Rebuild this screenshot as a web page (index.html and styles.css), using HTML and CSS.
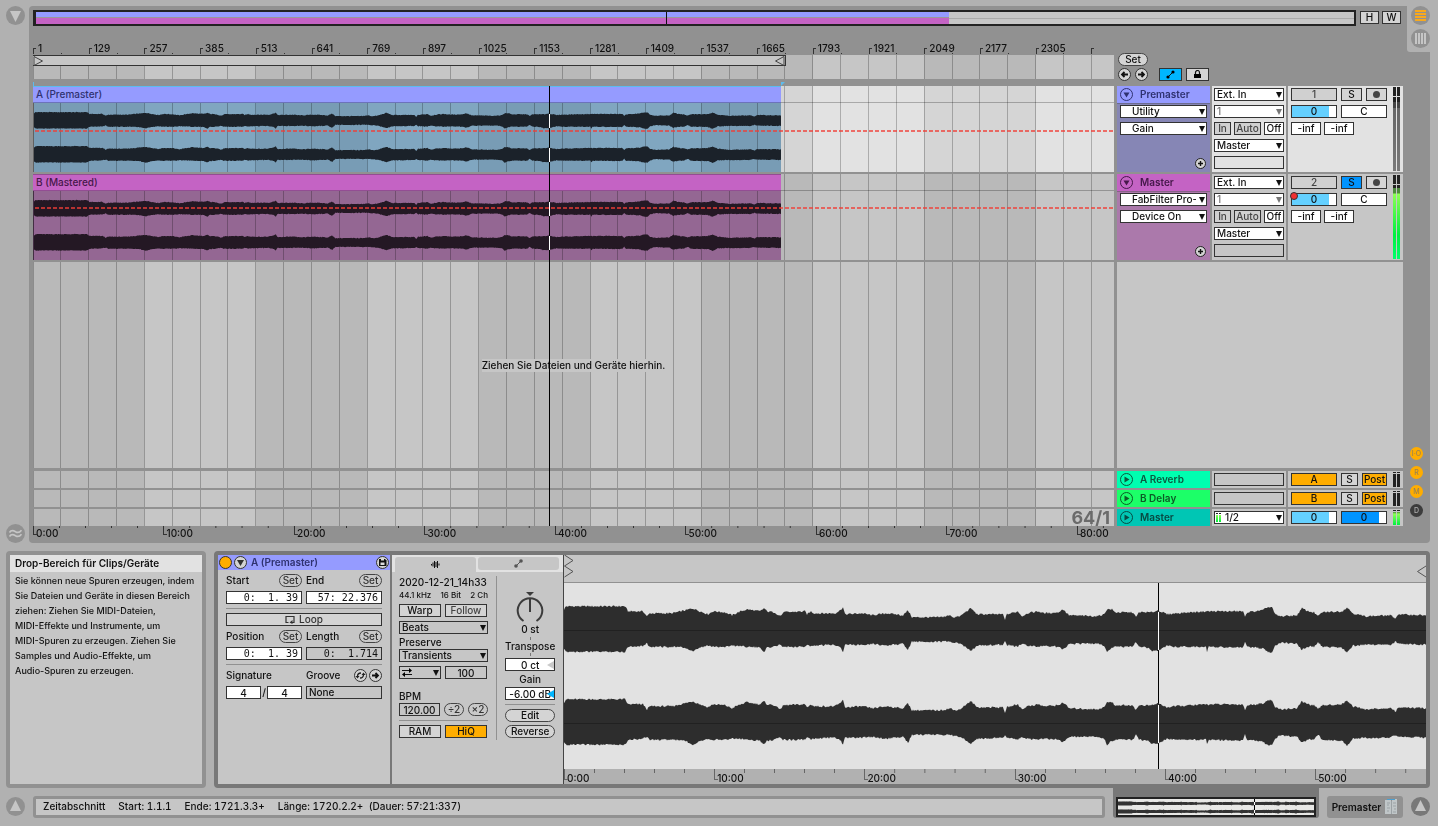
FILE: index.html
```
<!DOCTYPE html>
<html lang="de">
<head>
    <meta charset="UTF-8">
    <meta name="viewport" content="width=device-width, initial-scale=1.0">
    <title>Arrangement</title>
    <link rel="stylesheet" href="styles.css">
</head>
<body>
    <!-- Arrangement -->
    <div class="workspace">
        <div class="side-rail">
            <button class="round" aria-label="Browser"><svg viewBox="0 0 19 19"><path d="M4 5h11l-5.5 11z" fill="#c6c6c6"/></svg></button>
            <button class="round" aria-label="Groove Pool"><svg viewBox="0 0 19 19"><path d="M3.500 8.500c2-3 4-2 6-.8s4 1 6-1.500M3.500 12.500c2-3 4-2 6-.8s4 1 6-1.500" fill="none" stroke="#c6c6c6" stroke-width="1.600"/></svg></button>
        </div>

        <main class="arrange">
            <div class="arrange-main">
                <div class="overview-row">
                    <div class="overview">
                        <div class="overview-a"></div>
                        <div class="overview-b"></div>
                        <div class="overview-head"></div>
                    </div>
                    <button class="btn square">H</button>
                    <button class="btn square">W</button>
                </div>

                <div class="arrange-body">
                    <div class="timeline">
                        <div class="bar-ruler">
                            <span>1</span><span>129</span><span>257</span><span>385</span><span>513</span>
                            <span>641</span><span>769</span><span>897</span><span>1025</span><span>1153</span>
                            <span>1281</span><span>1409</span><span>1537</span><span>1665</span><span>1793</span>
                            <span>1921</span><span>2049</span><span>2177</span><span>2305</span><span></span>
                        </div>
                        <div class="scrub lane">
                            <div class="loop-bar">
                                <svg width="11" height="11" viewBox="0 0 11 11"><path d="M1 .5l8.500 4.500L1 9.500z" fill="none" stroke="#444"/></svg>
                                <svg width="11" height="11" viewBox="0 0 11 11"><path d="M10 .5L1.500 5 10 9.500z" fill="none" stroke="#444"/></svg>
                            </div>
                        </div>
                        <div class="marker-gap"><i></i></div>

                        <div class="lanes">
                            <div class="lane track selected">
                                <div class="clip clip-a">
                                    <div class="clip-name">A (Premaster)</div>
                                    <div class="clip-body"><svg class="wave" data-wave="arrange"></svg></div>
                                </div>
                                <div class="automation"></div>
                            </div>
                            <div class="lane track">
                                <div class="clip clip-b">
                                    <div class="clip-name">B (Mastered)</div>
                                    <div class="clip-body"><svg class="wave" data-wave="arrange"></svg></div>
                                </div>
                                <div class="automation high"></div>
                            </div>
                            <div class="lane drop-lane"><p>Ziehen Sie Dateien und Geräte hierhin.</p></div>
                            <div class="lane return"></div>
                            <div class="lane return"></div>
                            <div class="lane return"><span class="grid-size">64/1</span></div>
                            <div class="playhead"></div>
                        </div>

                        <div class="time-ruler arrange-time">
                            <span>0:00</span><span>10:00</span><span>20:00</span><span>30:00</span><span>40:00</span>
                            <span>50:00</span><span>60:00</span><span>70:00</span><span>80:00</span>
                        </div>
                    </div>

                    <div class="tracks">
                        <div class="locators">
                            <button class="pill set">Set</button>
                            <div class="locator-row">
                                <button class="ring" aria-label="Zurück"><svg viewBox="0 0 13 13"><path d="M10 6.500H4M6.500 4L4 6.500 6.500 9" fill="none" stroke="#111" stroke-width="1.800"/></svg></button>
                                <button class="ring" aria-label="Vor"><svg viewBox="0 0 13 13"><path d="M3 6.500h6M6.500 4L9 6.500 6.500 9" fill="none" stroke="#111" stroke-width="1.800"/></svg></button>
                                <button class="btn tool on-cyan" aria-label="Automation"><svg width="9" height="9" viewBox="0 0 9 9"><path d="M1.500 7.500l6-6" stroke="#111"/><circle cx="2" cy="7" r="1.600"/><circle cx="7" cy="2" r="1.600"/></svg></button>
                                <button class="btn tool" aria-label="Hüllkurven fixieren"><svg width="9" height="9" viewBox="0 0 9 9"><path d="M1 4h7v4H1z"/><path d="M2.500 4V2.500a2 2 0 0 1 4 0V4" fill="none" stroke="#111" stroke-width="1.200"/></svg></button>
                            </div>
                        </div>

                        <section class="track-row selected">
                            <div class="head head-a">
                                <div class="title"><button class="fold" aria-label="Falten"><svg viewBox="0 0 13 13"><circle cx="6.500" cy="6.500" r="6" fill="none" stroke="currentColor"/><path d="M3.500 4.500h6l-3 5z" fill="currentColor"/></svg></button>Premaster</div>
                                <div class="choosers">
                                    <label class="select inset"><select aria-label="Gerät"><option>Utility</option></select></label>
                                    <label class="select inset"><select aria-label="Parameter"><option>Gain</option></select></label>
                                </div>
                                <button class="plus" aria-label="Spur hinzufügen"><svg viewBox="0 0 11 11"><circle cx="5.500" cy="5.500" r="5" fill="#d4d4d4" stroke="#222"/><path d="M5.500 3v5M3 5.500h5" stroke="#111" stroke-width="1.400"/></svg></button>
                            </div>
                            <div class="io">
                                <label class="select"><select aria-label="Eingang"><option>Ext. In</option></select></label>
                                <label class="select dim"><select aria-label="Kanal"><option>1</option></select></label>
                                <div class="monitor"><button class="btn off">In</button><button class="btn off">Auto</button><button class="btn white">Off</button></div>
                                <label class="select"><select aria-label="Ausgang"><option>Master</option></select></label>
                                <div class="blank"></div>
                            </div>
                            <div class="mix">
                                <div class="mix-grid">
                                    <div class="mix-line"><button class="btn w46 off">1</button><button class="btn w21">S</button><button class="btn w21" aria-label="Aufnahme"><i class="rec"></i></button></div>
                                    <div class="mix-line"><label class="fader w46">0<input type="range" aria-label="Lautstärke" value="83"></label><button class="btn w46 white">C</button></div>
                                    <div class="mix-line sends"><button class="btn w30 white">-inf</button><button class="btn w30 white">-inf</button></div>
                                </div>
                                <div class="meter idle"><i></i><i></i></div>
                            </div>
                        </section>

                        <section class="track-row">
                            <div class="head head-b">
                                <div class="title"><button class="fold" aria-label="Falten"><svg viewBox="0 0 13 13"><circle cx="6.500" cy="6.500" r="6" fill="none" stroke="currentColor"/><path d="M3.500 4.500h6l-3 5z" fill="currentColor"/></svg></button>Master</div>
                                <div class="choosers">
                                    <label class="select inset"><select aria-label="Gerät"><option>FabFilter Pro-L</option></select></label>
                                    <label class="select inset"><select aria-label="Parameter"><option>Device On</option></select></label>
                                </div>
                                <button class="plus" aria-label="Spur hinzufügen"><svg viewBox="0 0 11 11"><circle cx="5.500" cy="5.500" r="5" fill="#d4d4d4" stroke="#222"/><path d="M5.500 3v5M3 5.500h5" stroke="#111" stroke-width="1.400"/></svg></button>
                            </div>
                            <div class="io">
                                <label class="select"><select aria-label="Eingang"><option>Ext. In</option></select></label>
                                <label class="select dim"><select aria-label="Kanal"><option>1</option></select></label>
                                <div class="monitor"><button class="btn off">In</button><button class="btn off">Auto</button><button class="btn white">Off</button></div>
                                <label class="select"><select aria-label="Ausgang"><option>Master</option></select></label>
                                <div class="blank"></div>
                            </div>
                            <div class="mix">
                                <div class="mix-grid">
                                    <div class="mix-line"><button class="btn w46 off">2</button><button class="btn w21 on-blue">S</button><button class="btn w21" aria-label="Aufnahme"><i class="rec"></i></button></div>
                                    <div class="mix-line"><label class="fader w46 automated">0<input type="range" aria-label="Lautstärke" value="83"></label><button class="btn w46 white">C</button></div>
                                    <div class="mix-line sends"><button class="btn w30 white">-inf</button><button class="btn w30 white">-inf</button></div>
                                </div>
                                <div class="meter live"><i></i><i></i></div>
                            </div>
                        </section>

                        <div class="empty-head"></div>

                        <section class="track-row return-row">
                            <div class="head"><div class="title ret-a"><button class="fold" aria-label="Entfalten"><svg viewBox="0 0 13 13"><circle cx="6.500" cy="6.500" r="6" fill="none" stroke="currentColor"/><path d="M4.500 3.500v6l5-3z" fill="currentColor"/></svg></button>A Reverb</div></div>
                            <div class="io"><div class="blank"></div></div>
                            <div class="mix"><div class="mix-grid"><div class="mix-line"><button class="btn w46 on-orange">A</button><button class="btn w17">S</button><button class="btn w25 on-orange">Post</button></div></div><div class="meter small"><i></i><i></i></div></div>
                        </section>
                        <section class="track-row return-row">
                            <div class="head"><div class="title ret-b"><button class="fold" aria-label="Entfalten"><svg viewBox="0 0 13 13"><circle cx="6.500" cy="6.500" r="6" fill="none" stroke="currentColor"/><path d="M4.500 3.500v6l5-3z" fill="currentColor"/></svg></button>B Delay</div></div>
                            <div class="io"><div class="blank"></div></div>
                            <div class="mix"><div class="mix-grid"><div class="mix-line"><button class="btn w46 on-orange">B</button><button class="btn w17">S</button><button class="btn w25 on-orange">Post</button></div></div><div class="meter small"><i></i><i></i></div></div>
                        </section>
                        <section class="track-row return-row">
                            <div class="head"><div class="title ret-m"><button class="fold" aria-label="Entfalten"><svg viewBox="0 0 13 13"><circle cx="6.500" cy="6.500" r="6" fill="none" stroke="currentColor"/><path d="M4.500 3.500v6l5-3z" fill="currentColor"/></svg></button>Master</div></div>
                            <div class="io"><label class="select out"><span class="mini-meter"><i></i><i></i></span><select aria-label="Master-Ausgang"><option>1/2</option></select></label></div>
                            <div class="mix"><div class="mix-grid"><div class="mix-line"><label class="fader w46">0<input type="range" aria-label="Master-Lautstärke" value="83"></label><label class="fader w46 cue">0<input type="range" aria-label="Cue-Lautstärke" value="83"></label></div></div><div class="meter small live"><i></i><i></i></div></div>
                        </section>
                    </div>
                </div>
            </div>

            <div class="view-rail">
                <div class="view-switch">
                    <button class="round" aria-label="Arrangement"><svg viewBox="0 0 19 19"><path d="M4 5h11M4 8h11M4 11h11M4 14h11" stroke="#f8a91c" stroke-width="2"/></svg></button>
                    <button class="round" aria-label="Session"><svg viewBox="0 0 19 19"><path d="M5 4v11M8 4v11M11 4v11M14 4v11" stroke="#c6c6c6" stroke-width="2"/></svg></button>
                </div>
                <div class="show-switch">
                    <button>I·O</button>
                    <button>R</button>
                    <button>M</button>
                    <button class="dark">D</button>
                </div>
            </div>
        </main>
    </div>

    <!-- Info view and clip view -->
    <div class="detail">
        <aside class="info">
            <h2>Drop-Bereich für Clips/Geräte</h2>
            <p>Sie können neue Spuren erzeugen, indem<br>Sie Dateien und Geräte in diesen Bereich<br>ziehen: Ziehen Sie MIDI-Dateien,<br>MIDI-Effekte und Instrumente, um<br>MIDI-Spuren zu erzeugen. Ziehen Sie<br>Samples und Audio-Effekte, um<br>Audio-Spuren zu erzeugen.</p>
        </aside>

        <section class="clip-view">
            <div class="clip-box">
                <div class="clip-title">
                    <button class="ring amber" aria-label="Clip aktivieren"></button>
                    <button class="ring" aria-label="Falten"><svg viewBox="0 0 13 13"><path d="M3 4h7l-3.500 6z" fill="#333"/></svg></button>
                    <span>A (Premaster)</span>
                    <button class="ring" aria-label="Speichern"><svg viewBox="0 0 13 13"><path d="M3 3h6l1.500 1.500V10H3z" fill="#111"/><path d="M4.500 6.500h4V9h-4zM5 3h3v1.500H5z" fill="#ddd"/></svg></button>
                </div>
                <div class="clip-form">
                    <div class="pair">
                        <div class="caption"><label for="start">Start</label><button class="pill">Set</button></div>
                        <div class="caption"><label for="end">End</label><button class="pill">Set</button></div>
                        <input class="field mono" id="start" value="0:  1. 39">
                        <input class="field mono" id="end" value="57: 22.376">
                    </div>
                    <hr>
                    <button class="btn loop-btn"><svg width="10" height="9" viewBox="0 0 10 9"><path d="M3.500 7.500H1v-6h8v6H6.500" fill="none" stroke="#333" stroke-width="1.200"/><path d="M7.500 5v4l-3-1.500z" fill="#333"/></svg>Loop</button>
                    <div class="pair">
                        <div class="caption"><label for="pos">Position</label><button class="pill">Set</button></div>
                        <div class="caption"><label for="len">Length</label><button class="pill">Set</button></div>
                        <input class="field mono" id="pos" value="0:  1. 39">
                        <input class="field mono grey" id="len" value="0:  1.714">
                    </div>
                    <hr>
                    <div class="pair">
                        <div class="caption"><label for="num">Signature</label></div>
                        <div class="caption"><label for="groove">Groove</label>
                            <span class="caption-icons">
                                <button class="ring" aria-label="Groove wechseln"><svg viewBox="0 0 13 13"><path d="M3.500 7.500c0-2.500 1.500-3.500 3.500-3.500M9.500 5.500c0 2.500-1.500 3.500-3.500 3.500" fill="none" stroke="#222" stroke-width="1.300"/><path d="M1.500 7h4l-2 2.500zM7.500 6h4l-2-2.500z" fill="#222"/></svg></button>
                                <button class="ring" aria-label="Groove übernehmen"><svg viewBox="0 0 13 13"><path d="M3 6.500h6M6.500 4L9 6.500 6.500 9" fill="none" stroke="#111" stroke-width="1.800"/></svg></button>
                            </span>
                        </div>
                        <div class="signature"><input class="field" id="num" value="4"><span>/</span><input class="field" aria-label="Nenner" value="4"></div>
                        <label class="select grey bare"><select id="groove"><option>None</option></select></label>
                    </div>
                </div>
            </div>

            <div class="sample-box">
                <div class="tabs">
                    <button class="tab active" aria-label="Sample"><svg width="9" height="9" viewBox="0 0 9 9"><path d="M.5 4v1.500M2 2.500v4M3.500 1v7M5 2v5M6.500 1v7M8 3.500v2" stroke="#111"/></svg></button>
                    <button class="tab" aria-label="Hüllkurven"><svg width="9" height="9" viewBox="0 0 9 9"><path d="M1.500 7.500l6-6" stroke="#555"/><circle cx="2" cy="7" r="1.800" fill="#555"/><circle cx="7" cy="2" r="1.800" fill="#555"/></svg></button>
                </div>
                <div class="sample-form">
                    <div class="sample-left">
                        <div class="file-name">2020-12-21_14h33</div>
                        <div class="file-info"><span>44.1 kHz</span><span>16 Bit</span><span>2 Ch</span></div>
                        <div class="two"><button class="btn">Warp</button><button class="btn soft">Follow</button></div>
                        <label class="select grey"><select aria-label="Warp-Modus"><option>Beats</option></select></label>
                        <label class="caption-line" for="preserve">Preserve</label>
                        <label class="select grey"><select id="preserve"><option>Transients</option></select></label>
                        <div class="two">
                            <label class="select grey looped"><svg width="10" height="9" viewBox="0 0 10 9"><path d="M0 2.500h8M2 6.500h8" stroke="#111" stroke-width="1.200"/><path d="M7 0l3 2.500L7 5zM3 4L0 6.500 3 9z"/></svg><select aria-label="Transient-Loop"><option></option></select></label>
                            <input class="field grey" aria-label="Hüllkurve" value="100">
                        </div>
                        <label class="caption-line bpm-label" for="bpm">BPM</label>
                        <div class="bpm"><input class="field grey" id="bpm" value="120.00"><button class="pill">÷2</button><button class="pill">×2</button></div>
                        <hr>
                        <div class="two"><button class="btn">RAM</button><button class="btn on-orange">HiQ</button></div>
                    </div>
                    <div class="sample-right">
                        <label class="knob">
                            <svg width="32" height="32" viewBox="0 0 32 32"><path d="M9.500 30A12.300 12.300 0 1 1 22.500 30" fill="none" stroke="#3c3c3c" stroke-width="2"/><path d="M16 7v14" stroke="#3c3c3c" stroke-width="2"/><path d="M12 1h8l-4 4z" fill="#3c3c3c"/></svg>
                            0 st
                            <input type="range" aria-label="Transpose" min="-48" max="48" value="0">
                        </label>
                        <div class="tick-label">Transpose</div>
                        <div class="cent"><input class="field" aria-label="Cent" value="0 ct"></div>
                        <label class="gain-label" for="gain">Gain</label>
                        <div class="cent blue"><input class="field" id="gain" value="-6.00 dB"></div>
                        <hr>
                        <button class="pill wide">Edit</button>
                        <button class="pill wide">Reverse</button>
                    </div>
                </div>
            </div>

            <div class="sample-display">
                <div class="marker-bar">
                    <svg width="11" height="27" viewBox="0 0 11 27"><path d="M.5 0L9 5.500.5 11M.5 11L9 16.500.5 22" fill="none" stroke="#555"/></svg>
                    <svg width="9" height="27" viewBox="0 0 9 27"><path d="M9 11L.5 16.500 9 22" fill="none" stroke="#555"/></svg>
                </div>
                <div class="wave-area">
                    <div class="wave-head"></div>
                    <svg class="wave" data-wave="detail"></svg>
                </div>
                <div class="time-ruler detail-time">
                    <span>0:00</span><span>10:00</span><span>20:00</span><span>30:00</span><span>40:00</span><span>50:00</span>
                </div>
            </div>
        </section>
    </div>

    <!-- Status bar -->
    <footer class="status-row">
        <div class="side-rail low"><button class="round" aria-label="Info"><svg viewBox="0 0 19 19"><path d="M4 14h11L9.500 3z" fill="#c6c6c6"/></svg></button></div>
        <div class="status"><span>Zeitabschnitt</span><span>Start: 1.1.1</span><span>Ende: 1721.3.3+</span><span>Länge: 1720.2.2+ &nbsp;(Dauer: 57:21:337)</span></div>
        <div class="mini-tab"><div class="mini"><svg class="wave" data-wave="mini"></svg></div></div>
        <button class="device-chip">Premaster<svg width="13" height="16" viewBox="0 0 13 16"><path d="M0 1h6v14H0zM7 0h5v15H7z" fill="#c0c6c8"/><path d="M2 0h8v1H2z" fill="#4a9ed0"/><path d="M2 4h3M2 6h2M2 9h3M2 12h2M8 4h3M8 7h3M9 10h2M8 13h3M6.500 2v13" stroke="#9ba2a5"/></svg></button>
        <button class="round dark" aria-label="Detailansicht"><svg viewBox="0 0 19 19"><path d="M4 14h11L9.500 3z" fill="#c6c6c6"/></svg></button>
    </footer>

    <script src="script.js"></script>
</body>
</html>
```
FILE: styles.css
```
* {
    margin: 0;
    padding: 0;
    box-sizing: border-box;
}
body {
    font-family: Inter, "Liberation Sans", sans-serif;
    font-size: 10px;
    font-weight: 500;
    line-height: 13px;
    color: #111;
    background-color: #b1b1b1;
    min-height: 100vh;
    display: flex;
    flex-direction: column;
}
button, input, select {
    font: inherit;
    color: inherit;
    border: none;
    border-radius: 0;
    background: none;
    appearance: none;
    min-width: 0;
}
button {
    display: flex;
    align-items: center;
    justify-content: center;
    white-space: nowrap;
}
svg {
    display: block;
}
hr {
    border: none;
    height: 1px;
    background-color: #919191;
}

/* Shared controls */
.round {
    width: 19px;
    height: 19px;
    border-radius: 50%;
    background-color: #919191;
    flex: none;
}
.round svg {
    width: 19px;
    height: 19px;
}
.round.dark {
    background-color: #787878;
}
.btn {
    height: 13px;
    border: 1px solid #333;
    background-color: #d4d4d4;
    line-height: 11px;
}
.btn.white { background-color: #fff; }
.btn.off { background-color: #d0d0d0; color: #444; }
.btn.soft { color: #444; }
.btn.on-cyan { background-color: #00b6ff; }
.btn.on-blue { background-color: #0094ff; }
.btn.on-orange { background-color: #ffad00; }
.square { width: 19px; }
.w46 { width: 46px; }
.w30 { width: 30px; }
.w25 { width: 25px; }
.w21 { width: 21px; }
.w17 { width: 17px; }

.pill {
    height: 13px;
    padding: 0 4px;
    border: 1px solid #444;
    border-radius: 7px;
    background-color: #c9c9c9;
    color: #333;
    line-height: 11px;
}
.ring {
    width: 13px;
    height: 13px;
    border: 1px solid #333;
    border-radius: 50%;
    background-color: #d4d4d4;
    flex: none;
}
.ring svg {
    width: 13px;
    height: 13px;
    flex: none;
}
.ring.amber {
    background-color: #ffad00;
}
.select {
    position: relative;
    display: flex;
    align-items: center;
    height: 13px;
    border: 1px solid #333;
    background-color: #fff;
    min-width: 0;
}
.select select {
    width: 100%;
    height: 11px;
    line-height: 11px;
    padding: 0 10px 0 2px;
    overflow: hidden;
}
.select::after {
    content: "";
    position: absolute;
    right: 1px;
    border: 3px solid transparent;
    border-top: 6px solid #111;
    border-bottom: none;
    pointer-events: none;
}
.select.inset select { padding-left: 11px; }
.select.dim { color: #777; }
.select.dim::after { border-top-color: #777; }
.select.grey { background-color: #c6c6c6; }
.select.bare::after { display: none; }
.field {
    height: 13px;
    width: 100%;
    border: 1px solid #333;
    background-color: #fff;
    text-align: center;
    line-height: 11px;
}
.field.grey {
    background-color: #c6c6c6;
}
.field.mono {
    font-family: "DejaVu Sans Mono", monospace;
    font-size: 10px;
    text-align: right;
    padding-right: 3px;
}
.fader {
    position: relative;
    height: 13px;
    border: 1px solid #333;
    background: linear-gradient(to right, #64d0ff 84%, #fff 84%);
    text-align: center;
    line-height: 11px;
}
.fader.cue {
    background: linear-gradient(to right, #0094ff 84%, #fff 84%);
}
.fader input, .knob input {
    position: absolute;
    inset: 0;
    width: 100%;
    opacity: 0;
}
.fader.automated::before {
    content: "";
    position: absolute;
    left: -2px;
    top: -2px;
    width: 6px;
    height: 6px;
    border: 1px solid #333;
    border-radius: 50%;
    background-color: #f03030;
}

/* Arrangement */
.workspace {
    flex: 1;
    display: flex;
    padding: 6px 8px 0 0;
}
.side-rail {
    width: 29px;
    padding-left: 6px;
    display: flex;
    flex-direction: column;
    justify-content: space-between;
    flex: none;
}
.arrange {
    flex: 1;
    min-width: 0;
    display: flex;
    border-radius: 4px;
    background-color: #919191;
}
.arrange-main {
    flex: 1;
    min-width: 0;
    padding: 4px 4px 0 4px;
    display: flex;
    flex-direction: column;
}
.overview-row {
    display: flex;
    align-items: flex-start;
    gap: 3px;
    padding-right: 2px;
}
.overview-row .square {
    margin-top: 1px;
}
.overview {
    position: relative;
    flex: 1;
    height: 16px;
    margin-right: 1px;
    border: 2px solid #222;
    border-left-width: 3px;
    background: linear-gradient(#c6c6c6 6px, #aaa 6px, #aaa 7px, #c6c6c6 7px);
}
.overview-a, .overview-b {
    width: 69.3%;
    height: 6px;
    background-color: #959bff;
}
.overview-a {
    border-bottom: 1px solid #999;
}
.overview-b {
    background-color: #c463c4;
}
.overview-head {
    position: absolute;
    top: 0;
    bottom: 0;
    left: 47.8%;
    width: 1px;
    background-color: #111;
}
.arrange-body {
    flex: 1;
    display: flex;
    gap: 3px;
}
.timeline {
    flex: 1;
    min-width: 0;
    display: flex;
    flex-direction: column;
}
.bar-ruler {
    height: 29px;
    padding-top: 16px;
    display: grid;
    grid-template-columns: repeat(19, minmax(0, 1fr)) minmax(0, 0.407fr);
}
.bar-ruler span {
    position: relative;
    padding-left: 5px;
}
.bar-ruler span::before {
    content: "";
    position: absolute;
    left: 0;
    top: 6px;
    width: 2px;
    height: 5px;
    border-left: 1px solid #333;
    border-top: 1px solid #333;
}
.bar-ruler span::after {
    content: "";
    position: absolute;
    left: 50%;
    top: 11px;
    width: 1px;
    height: 1px;
    background-color: #333;
}
.bar-ruler span:last-child::after {
    display: none;
}

.lane {
    position: relative;
    background-color: #c6c6c6;
}
.lane .shade, .lane .lines {
    position: absolute;
    left: 0;
    top: 0;
    width: 100%;
    height: 100%;
    shape-rendering: crispEdges;
}
.shade { fill: #b9b9b9; }
.lines { stroke: #000; stroke-opacity: 0.24; }
.selected.lane { background-color: #e2e2e2; }
.selected .shade { fill: #d5d5d5; }
.scrub {
    height: 24px;
}
.loop-bar {
    position: relative;
    z-index: 1;
    width: 69.7%;
    height: 11px;
    border: solid #333;
    border-width: 1px 1px 1px 0;
    background-color: #c6c6c6;
    display: flex;
    justify-content: space-between;
}
.marker-gap {
    width: 69.6%;
    height: 7px;
    padding-top: 3px;
    display: flex;
    background: linear-gradient(#5cbcee, #5cbcee) left bottom / 1px 4px no-repeat;
}
.marker-gap i {
    margin-left: auto;
    border: solid transparent;
    border-width: 4px 4px 0 0;
    border-top-color: #5cbcee;
}
.lanes {
    position: relative;
    flex: 1;
    display: flex;
    flex-direction: column;
}
.track {
    height: 86px;
    margin-bottom: 2px;
}
.track::after {
    content: "";
    position: absolute;
    left: 0;
    right: 0;
    top: 16px;
    height: 1px;
    background-color: rgba(0, 0, 0, 0.25);
}
.clip {
    position: relative;
    width: 69.2%;
}
.clip-name {
    position: relative;
    z-index: 1;
    height: 17px;
    padding: 1px 3px 0;
    line-height: 13px;
    border: solid #934d93;
    border-width: 1px 0;
    background-color: #c463c4;
    color: #46184a;
}
.clip-a .clip-name {
    border-color: #5cbcee #6c73ba #6c73ba;
    background-color: #959bff;
    color: #2f3270;
}
.clip-body {
    position: relative;
    height: 69px;
    border-left: 1px solid rgba(0, 0, 0, 0.4);
}
.clip-b .clip-body { background-color: #946793; }
/* tints the shaded lane below instead of hiding it */
.clip-a .clip-body::before {
    content: "";
    position: absolute;
    inset: 0;
    background-color: #90bbd9;
    mix-blend-mode: multiply;
}
.wave {
    position: relative;
    z-index: 3;
    width: 100%;
    height: 100%;
}
.wave rect {
    shape-rendering: crispEdges;
}
.clip-a .wave { fill: #1b222a; }
.clip-b .wave { fill: #241824; }
.automation {
    position: absolute;
    z-index: 4;
    left: 2px;
    right: 0;
    top: 44px;
    height: 2px;
    background: repeating-linear-gradient(to right, rgba(240, 62, 54, 0.72) 0 4px, transparent 4px 6px);
}
.automation.high {
    top: 33px;
}
.drop-lane {
    flex: 1;
    margin-bottom: 3px;
    display: flex;
    align-items: center;
    justify-content: center;
}
.drop-lane p {
    position: relative;
    z-index: 1;
    background-color: #c6c6c6;
}
.return {
    height: 17px;
    margin-bottom: 2px;
}
.return:nth-last-child(2) {
    margin-bottom: 0;
}
.grid-size {
    position: absolute;
    right: 4px;
    top: 0;
    font-size: 18px;
    font-weight: 700;
    line-height: 17px;
    color: #6b6b6b;
}
.playhead {
    position: absolute;
    z-index: 2;
    left: 47.7%;
    top: 0;
    bottom: 0;
    width: 1px;
    background-color: #000;
}
.time-ruler {
    height: 17px;
    display: grid;
}
.time-ruler span {
    position: relative;
    padding: 1px 0 0 3px;
    background: linear-gradient(to right, #333 1px, transparent 1px) 0 0 / 20% 2px repeat-x;
}
.time-ruler span::before {
    content: "";
    position: absolute;
    left: 0;
    top: 0;
    width: 3px;
    height: 8px;
    border: solid #333;
    border-width: 0 0 1px 1px;
}
.arrange-time {
    grid-template-columns: repeat(8, minmax(0, 1fr)) minmax(0, 0.284fr);
}
.arrange-time span:last-child {
    background-size: 70% 2px;
}

/* Track headers and mixer */
.tracks {
    width: 286px;
    flex: none;
    display: flex;
    flex-direction: column;
    padding-bottom: 17px;
}
.locators {
    height: 60px;
    padding: 27px 0 0 1px;
    display: flex;
    flex-direction: column;
    align-items: flex-start;
    gap: 2px;
}
.pill.set {
    width: 30px;
    background-color: #d4d4d4;
    color: #111;
}
.locator-row {
    display: flex;
    gap: 4px;
}
.tool {
    width: 23px;
}
.locator-row .ring + .tool {
    margin-left: 7px;
}
.track-row {
    height: 86px;
    margin-bottom: 2px;
    display: grid;
    grid-template-columns: 93px 74px 1fr;
    gap: 2px;
}
.io, .mix, .empty-head {
    background-color: #c6c6c6;
}
.selected .io, .selected .mix {
    background-color: #e2e2e2;
}
.head {
    display: flex;
    flex-direction: column;
}
.title {
    height: 17px;
    padding-left: 3px;
    display: flex;
    align-items: center;
    gap: 7px;
    font-weight: 600;
}
.fold svg {
    width: 13px;
    height: 13px;
}
.head-a { background-color: #8686b5; color: #2f3270; }
.head-a .title { background-color: #959bff; }
.head-b { background-color: #ab79ab; color: #46184a; }
.head-b .title { background-color: #c463c4; }
.ret-a { background-color: #00ffb0; color: #0a5a40; }
.ret-b { background-color: #1cff68; color: #0c5c26; }
.ret-m { background-color: #00c6b4; color: #084a44; }
.choosers {
    padding: 1px 3px 2px;
    border-top: 1px solid rgba(0, 0, 0, 0.2);
    display: flex;
    flex-direction: column;
    gap: 4px;
    color: #111;
}
.plus {
    margin: auto 4px 3px auto;
}
.plus svg {
    width: 11px;
    height: 11px;
}
.io {
    padding: 2px;
    display: flex;
    flex-direction: column;
    gap: 4px;
}
.monitor {
    display: flex;
    gap: 3px;
}
.monitor .btn { width: 20px; }
.monitor .btn:first-child { width: 17px; }
.monitor .btn:nth-child(2) { width: 27px; }
.blank {
    height: 13px;
    border: 1px solid #333;
}
.mix {
    display: flex;
    justify-content: space-between;
    padding: 1px 3px;
}
.mix-grid {
    padding-top: 1px;
    display: flex;
    flex-direction: column;
    gap: 4px;
}
.mix-line {
    display: flex;
    gap: 4px;
}
.mix-line.sends {
    gap: 3px;
}
.rec {
    width: 7px;
    height: 7px;
    border-radius: 50%;
    background-color: #444;
}
.meter {
    display: flex;
    gap: 1px;
}
.meter i {
    width: 3px;
    background-color: #222;
}
.meter.idle i {
    background: linear-gradient(#222 9px, #ddd 9px, #ddd 10px, #222 10px, #222 15px, #444 15px, #444 21px, #666 21px, #787878);
}
.meter.live i {
    background: linear-gradient(#222 9px, #c6c6c6 9px, #c6c6c6 10px, #222 10px, #222 13px, #4c8a3c 13px, #4c8a3c 18px, #8cff54 19px, #00f040 60px, #00ff6c);
}
.meter.small i {
    background: linear-gradient(#222 1px, #c6c6c6 1px, #c6c6c6 2px, #222 2px);
}
.meter.small.live i {
    background: linear-gradient(#222 1px, #c6c6c6 1px, #c6c6c6 2px, #4c8a3c 2px, #8cff54 4px, #00f040);
}
.empty-head {
    flex: 1;
    margin-bottom: 3px;
}
.return-row {
    height: 17px;
}
.return-row:last-child {
    margin-bottom: 0;
}
.mini-meter {
    display: flex;
    gap: 1px;
    padding-left: 1px;
}
.mini-meter i {
    width: 2px;
    height: 9px;
    background: linear-gradient(#222 1px, #fff 1px, #fff 2px, #8cff54 2px, #00f040);
}
.out select {
    padding-left: 4px;
}

/* Right rail with view and section switches */
.view-rail {
    width: 23px;
    display: flex;
    flex-direction: column;
    justify-content: space-between;
}
.view-switch {
    padding: 0 0 4px 4px;
    height: 46px;
    display: flex;
    flex-direction: column;
    gap: 4px;
    background-color: #b1b1b1;
    border-bottom-left-radius: 3px;
}
.show-switch {
    padding: 0 0 26px 3px;
    display: flex;
    flex-direction: column;
    gap: 6px;
}
.show-switch button {
    width: 13px;
    height: 13px;
    border-radius: 50%;
    background-color: #ffad00;
    color: #9a8350;
    font-size: 7px;
}
.show-switch .dark {
    background-color: #3c3c3c;
    color: #b1b1b1;
}

/* Info view */
.detail {
    margin: 8px 8px 8px 6px;
    height: 237px;
    display: flex;
    gap: 8px;
}
.info {
    width: 200px;
    flex: none;
    border: 4px solid #919191;
    border-radius: 4px;
    background-color: #c6c6c6;
}
.info h2 {
    height: 17px;
    padding: 2px 5px;
    background-color: #e2e2e2;
    font-size: 10px;
    font-weight: 600;
}
.info p {
    padding: 1px 5px;
    font-size: 9px;
    line-height: 15px;
    white-space: nowrap;
}

/* Clip view */
.clip-view {
    flex: 1;
    min-width: 0;
    display: flex;
    border: 4px solid #787878;
    border-radius: 4px;
    background-color: #c6c6c6;
}
.clip-box {
    width: 174px;
    flex: none;
    border-right: 2px solid #787878;
}
.clip-title {
    height: 15px;
    padding: 0 1px;
    display: flex;
    align-items: center;
    gap: 2px;
    background-color: #959bff;
    color: #2f3270;
}
.clip-title span {
    flex: 1;
    padding-left: 2px;
    font-weight: 600;
}
.clip-form {
    padding: 4px 8px;
    display: flex;
    flex-direction: column;
    gap: 4px;
}
.pair {
    display: grid;
    grid-template-columns: 1fr 1fr;
    gap: 4px;
}
.caption {
    height: 13px;
    display: flex;
    align-items: center;
    justify-content: space-between;
}
.caption-icons {
    display: flex;
    gap: 2px;
}
.pair .pill {
    width: 23px;
    padding: 0;
}
.loop-btn {
    gap: 4px;
    color: #333;
}
.signature {
    display: flex;
    gap: 1px;
}
.signature .field {
    flex: 1;
}

.sample-box {
    width: 171px;
    flex: none;
    display: flex;
    flex-direction: column;
}
.tabs {
    height: 17px;
    padding: 2px 4px 0 3px;
    display: flex;
    gap: 2px;
    background-color: #e2e2e2;
}
.tab {
    flex: 1;
    height: 13px;
    border-radius: 3px;
    background-color: #c6c6c6;
}
.tab.active {
    height: 15px;
    border-radius: 3px 3px 0 0;
}
.sample-form {
    flex: 1;
    padding: 4px 8px 44px 7px;
    display: flex;
}
.sample-left {
    width: 98px;
    padding-right: 8px;
    border-right: 1px solid #919191;
    display: flex;
    flex-direction: column;
    gap: 4px;
}
.file-name {
    margin-bottom: -4px;
    white-space: nowrap;
}
.file-info {
    display: flex;
    justify-content: space-between;
    font-size: 8px;
    margin-bottom: -2px;
}
.two {
    display: grid;
    grid-template-columns: 42px 42px;
    gap: 4px;
}
.caption-line {
    height: 11px;
    margin: -2px 0;
}
.bpm-label {
    margin-top: 7px;
}
.bpm {
    display: grid;
    grid-template-columns: 41px 20px 20px;
    gap: 4px;
}
.bpm .pill {
    padding: 0;
}
.looped svg {
    margin-left: 2px;
    flex: none;
}
.sample-right {
    flex: 1;
    padding-left: 8px;
    display: flex;
    flex-direction: column;
    align-items: center;
    gap: 1px;
}
.sample-right hr {
    width: 100%;
    margin: 3px 0;
}
.knob {
    position: relative;
    padding-top: 15px;
    text-align: center;
}
.tick-label {
    padding: 3px 0;
    margin-bottom: 1px;
    background: linear-gradient(#777, #777) top / 1px 3px no-repeat, linear-gradient(#777, #777) bottom / 1px 3px no-repeat;
}
.gain-label {
    margin-top: 1px;
}
.cent {
    position: relative;
    display: flex;
    width: 100%;
}
.cent::after {
    content: "";
    position: absolute;
    right: 1px;
    top: 3px;
    border: 4px solid transparent;
    border-right: 7px solid #c9c9c9;
    border-left: none;
}
.cent.blue::after {
    border-right-color: #00b6ff;
}
.pill.wide {
    width: 100%;
    margin-bottom: 2px;
    background-color: #d4d4d4;
    color: #111;
}

.sample-display {
    flex: 1;
    min-width: 0;
    display: flex;
    flex-direction: column;
    border-left: 1px solid #444;
}
.marker-bar {
    height: 28px;
    display: flex;
    justify-content: space-between;
    border-bottom: 1px solid #919191;
}
.wave-area {
    position: relative;
    flex: 1;
    min-height: 0;
    background-color: #e2e2e2;
}
.wave-area .wave {
    fill: #2d2d2d;
}
.wave-head {
    position: absolute;
    left: 68.9%;
    top: 0;
    bottom: 0;
    width: 1px;
    background-color: #000;
}
.detail-time {
    height: 15px;
    background-color: #b1b1b1;
    grid-template-columns: repeat(5, minmax(0, 1fr)) minmax(0, 0.738fr);
}
.detail-time span {
    padding-top: 3px;
    background-image: linear-gradient(to right, #666 1px, transparent 1px);
    background-size: 20% 4px;
}
.detail-time span:last-child {
    background-size: 27.1% 4px;
}
.detail-time span::before {
    height: 10px;
    border-color: #666;
}

/* Status bar */
.status-row {
    height: 30px;
    padding-right: 8px;
    display: flex;
    align-items: flex-start;
}
.side-rail.low {
    padding-top: 1px;
}
.status {
    flex: 1;
    height: 22px;
    margin: 0 8px 0 4px;
    padding: 1px 7px;
    border: 3px solid #919191;
    border-radius: 3px;
    background-color: #c6c6c6;
    display: flex;
    gap: 13px;
    font-variant-numeric: tabular-nums;
}
.mini-tab {
    width: 206px;
    margin: -8px 8px 0 0;
    padding: 9px 3px 1px;
    background-color: #787878;
    border-radius: 0 0 3px 3px;
}
.mini {
    height: 20px;
    border: 2px solid #222;
    background-color: #e8e8e6;
}
.mini .wave {
    fill: #333;
}
.device-chip {
    width: 76px;
    height: 22px;
    margin-right: 8px;
    gap: 4px;
    border-radius: 3px;
    background-color: #919191;
    font-weight: 600;
}
.status-row > .round {
    margin-top: 1px;
}
```
FILE: script.js
```
const NS = 'http://www.w3.org/2000/svg';

// Envelope of the recording: [x, upper, lower]
const LENGTH = 862;
const envelope = [
    [0, 20, 20], [2, 23, 22], [61, 23, 22], [64, 18, 17], [79, 18, 16], [83, 13, 14], [86, 16, 17], [108, 16, 17],
    [121, 19, 18], [129, 21, 22], [136, 18, 18], [144, 15, 16], [149, 18, 17], [161, 17, 17], [168, 14, 16], [174, 17, 16],
    [183, 20, 17], [196, 18, 18], [200, 21, 22], [203, 18, 18], [211, 17, 17], [214, 14, 15], [218, 14, 16], [219, 17, 17],
    [241, 18, 17], [243, 15, 15], [247, 18, 17], [250, 16, 16], [271, 16, 15], [276, 19, 17], [279, 22, 22], [281, 15, 15],
    [298, 16, 15], [308, 14, 14], [323, 16, 16], [339, 14, 14], [344, 19, 20], [348, 12, 12], [376, 12, 12], [387, 14, 12],
    [389, 12, 13], [396, 13, 14], [401, 17, 17], [407, 21, 21], [413, 15, 16], [439, 15, 15], [441, 10, 12], [443, 15, 15],
    [454, 18, 17], [458, 13, 14], [463, 16, 16], [474, 18, 17], [480, 16, 16], [494, 17, 17], [499, 20, 20], [505, 14, 14],
    [533, 13, 14], [540, 15, 16], [543, 20, 22], [548, 20, 18], [551, 17, 17], [569, 17, 17], [572, 12, 12], [575, 17, 17],
    [584, 17, 18], [588, 17, 21], [594, 19, 21], [603, 15, 16], [611, 16, 17], [642, 18, 17], [643, 18, 22], [645, 18, 17],
    [679, 18, 18], [681, 12, 12], [683, 17, 17], [699, 19, 19], [703, 22, 22], [708, 22, 23], [711, 15, 16], [716, 13, 13],
    [733, 14, 14], [738, 21, 20], [744, 18, 17], [750, 17, 17], [754, 13, 12], [758, 17, 17], [778, 18, 18], [783, 22, 23],
    [789, 16, 16], [801, 13, 15], [826, 14, 15], [832, 11, 12], [834, 15, 14], [862, 14, 15]
];

function level(x, side) {
    for (let i = 1; i < envelope.length; i++) {
        const a = envelope[i - 1];
        const b = envelope[i];
        if (x <= b[0]) {
            return a[side] + (b[side] - a[side]) * (x - a[0]) / (b[0] - a[0]);
        }
    }
    return envelope[envelope.length - 1][side];
}

function noise(x, seed) {
    const n = Math.sin(x * 12.9898 + seed * 78.233) * 43758.5453;
    return (n - Math.floor(n) - 0.4) * 1.8;
}

function channelPath(center, scale, seed) {
    let top = '';
    let bottom = '';
    for (let x = 0; x <= LENGTH; x++) {
        const up = (level(x, 1) + noise(x, seed)) * scale;
        const down = (level(x, 2) + noise(x, seed + 1)) * scale;
        top += (x ? 'L' : 'M') + x + ' ' + (center - up).toFixed(1);
        bottom = 'L' + x + ' ' + (center + down).toFixed(1) + bottom;
    }
    return top + bottom + 'Z';
}

function add(parent, name, attrs) {
    const el = document.createElementNS(NS, name);
    for (const key in attrs) el.setAttribute(key, attrs[key]);
    parent.appendChild(el);
    return el;
}

const views = {
    arrange: { height: 69, centers: [17.5, 51.5], scale: 0.36, head: 594.3, headWidth: 1.2 },
    detail: { height: 186, centers: [46.5, 139.5], scale: 1, head: 594, headWidth: 1.1 },
    mini: { height: 16, centers: [4.5, 12.5], scale: 0.09, head: 600, headWidth: 4 }
};

document.querySelectorAll('.wave').forEach(svg => {
    const view = views[svg.dataset.wave];
    svg.setAttribute('viewBox', `0 0 ${LENGTH} ${view.height}`);
    svg.setAttribute('preserveAspectRatio', 'none');
    if (svg.dataset.wave === 'mini') {
        add(svg, 'rect', { x: view.head, y: 0, width: view.headWidth, height: view.height, fill: '#000' });
    }
    view.centers.forEach((center, i) => {
        add(svg, 'path', { d: channelPath(center, view.scale, i + 1) });
        if (svg.dataset.wave === 'detail') {
            add(svg, 'rect', { x: 0, y: center, width: LENGTH, height: 1, fill: '#000', opacity: 0.25 });
        }
        const up = 18 * view.scale;
        add(svg, 'rect', {
            x: view.head, y: center - up, width: view.headWidth,
            height: up + 20 * view.scale, fill: '#fff'
        });
    });
});

// Grid: one line per 64 bars, shaded in groups of four
const CELLS = 38.815;
document.querySelectorAll('.lane').forEach(lane => {
    const shade = document.createElementNS(NS, 'svg');
    const lines = document.createElementNS(NS, 'svg');
    shade.setAttribute('class', 'shade');
    lines.setAttribute('class', 'lines');
    for (let k = 0; k < CELLS; k++) {
        const x = k / CELLS * 100 + '%';
        if (k % 8 === 0) {
            add(shade, 'rect', { x: x, y: 0, width: 4 / CELLS * 100 + '%', height: '100%' });
        }
        add(lines, 'line', { x1: x, x2: x, y1: 0, y2: '100%' });
    }
    lane.prepend(shade);
    const clip = lane.querySelector('.clip');
    if (clip) clip.after(lines);
    else shade.after(lines);
});
```
